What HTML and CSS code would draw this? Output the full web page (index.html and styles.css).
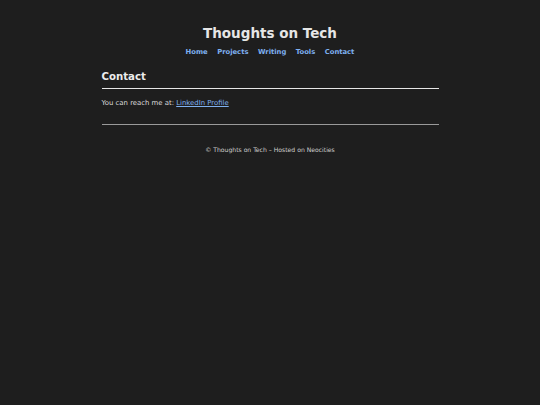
FILE: index.html
```html
<!DOCTYPE html>
<html>
<head>
<meta charset="utf-8">
<link rel="stylesheet" href="styles.css">
</head>
<body>
<div class="page">
  <header class="site-header">
    <h1 class="site-title">Thoughts on Tech</h1>
    <nav class="site-nav">
      <a href="#">Home</a>
      <a href="#">Projects</a>
      <a href="#">Writing</a>
      <a href="#">Tools</a>
      <a href="#">Contact</a>
    </nav>
  </header>
  <main class="content">
    <h2 class="section-title">Contact</h2>
    <p class="text">You can reach me at: <a class="inline-link" href="#">LinkedIn Profile</a></p>
  </main>
  <footer class="site-footer">
    <p class="footer-text">© Thoughts on Tech – Hosted on Neocities</p>
  </footer>
</div>
</body>
</html>
```
FILE: styles.css
```css
html, body {
  margin: 0;
  padding: 0;
  background: #1e1e1e;
}
body {
  font-family: "DejaVu Sans", Verdana, sans-serif;
  color: #e6e6e6;
}
.page {
  width: 337px;
  margin: 0 auto;
  padding-top: 25px;
}
.site-header {
  text-align: center;
}
.site-title {
  margin: 0;
  font-size: 13.5px;
  line-height: 16px;
  font-weight: bold;
  color: #e6e6e6;
}
.site-nav {
  margin-top: 6px;
  display: flex;
  justify-content: center;
  gap: 9.5px;
}
.site-nav a {
  color: #7fb0f0;
  font-size: 6.8px;
  font-weight: bold;
  text-decoration: none;
  line-height: 10px;
}
.content {
  margin-top: 13px;
  padding-bottom: 15.5px;
  border-bottom: 1.5px solid #9a9a9a;
}
.section-title {
  margin: 0;
  font-size: 10.2px;
  line-height: 14px;
  padding-bottom: 4px;
  border-bottom: 1.5px solid #e6e6e6;
  color: #ececec;
}
.text {
  margin: 9px 0 0;
  font-size: 6.9px;
  line-height: 10px;
  color: #dcdcdc;
}
.inline-link {
  color: #7fb0f0;
  text-decoration: underline;
}
.site-footer {
  text-align: center;
  padding-top: 20px;
}
.footer-text {
  margin: 0;
  font-size: 6.1px;
  line-height: 9px;
  color: #d0d0d0;
}
```
